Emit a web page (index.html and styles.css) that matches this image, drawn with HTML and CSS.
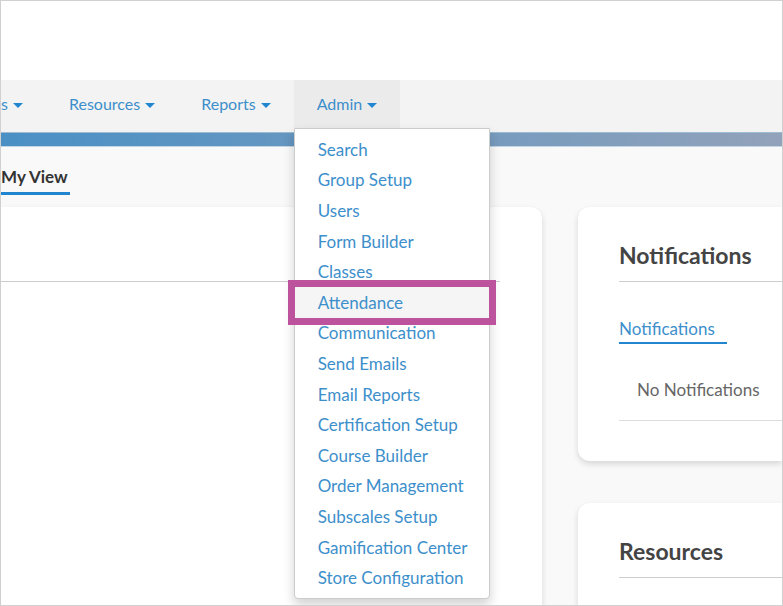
FILE: index.html
```html
<!DOCTYPE html>
<html lang="en">

<head>
  <meta charset="utf-8">
  <meta name="viewport" content="width=device-width, initial-scale=1.0">
  <title>My View</title>
  <link rel="stylesheet" href="styles.css">
</head>

<body>
  <header class="top"></header>

  <nav class="navbar">
    <ul class="nav">
      <li><a href="#">s <span class="caret"></span></a></li>
      <li><a href="#">Resources <span class="caret"></span></a></li>
      <li><a href="#">Reports <span class="caret"></span></a></li>
      <li class="open">
        <a href="#">Admin <span class="caret"></span></a>
        <ul class="dropdown">
          <li><a href="#">Search</a></li>
          <li><a href="#">Group Setup</a></li>
          <li><a href="#">Users</a></li>
          <li><a href="#">Form Builder</a></li>
          <li><a href="#">Classes</a></li>
          <li class="selected"><a href="#">Attendance</a></li>
          <li><a href="#">Communication</a></li>
          <li><a href="#">Send Emails</a></li>
          <li><a href="#">Email Reports</a></li>
          <li><a href="#">Certification Setup</a></li>
          <li><a href="#">Course Builder</a></li>
          <li><a href="#">Order Management</a></li>
          <li><a href="#">Subscales Setup</a></li>
          <li><a href="#">Gamification Center</a></li>
          <li><a href="#">Store Configuration</a></li>
        </ul>
      </li>
    </ul>
  </nav>
  <div class="stripe"></div>

  <main>
    <div class="tabs">
      <a class="tab" href="#">My View</a>
    </div>

    <div class="columns">
      <section class="panel main-panel">
        <hr>
      </section>

      <div class="side">
        <section class="panel card">
          <h2>Notifications</h2>
          <a class="card-tab" href="#">Notifications</a>
          <p class="empty">No Notifications</p>
        </section>
        <section class="panel card">
          <h2>Resources</h2>
        </section>
      </div>
    </div>
  </main>
</body>

</html>
```

FILE: styles.css
```css
* {
  box-sizing: border-box;
}

body {
  margin: 0;
  height: 100vh;
  display: flex;
  flex-direction: column;
  overflow: hidden;
  border: 1px solid #d0d0d0;
  background-color: #f9f9f9;
  color: #444;
  font-family: Lato, "Open Sans", sans-serif;
  font-size: 17px;
}

a {
  color: #3d8fcb;
  text-decoration: none;
}

ul {
  list-style: none;
  margin: 0;
  padding: 0;
}

.top {
  flex: none;
  height: 79px;
  background-color: white;
}

/* navigation */
.navbar {
  flex: none;
  background-color: #f3f3f3;
}

.nav {
  display: flex;
}

.nav > li {
  position: relative;
}

.nav > li > a {
  display: flex;
  align-items: center;
  gap: 5px;
  height: 52px;
  padding: 0 23px 6px;
  font-size: 16px;
}

.nav > li:first-child > a {
  padding-left: 0;
}

.nav > .open {
  background-color: #ebebeb;
}

.caret {
  margin-top: 4px;
  border-top: 5px solid #2185d0;
  border-left: 5px solid transparent;
  border-right: 5px solid transparent;
}

.dropdown {
  position: absolute;
  top: 48px;
  left: 0;
  z-index: 10;
  display: flex;
  flex-direction: column;
  width: 196px;
  height: 471px;
  padding: 5px 0;
  background-color: white;
  border: 1px solid #ccc;
  border-radius: 0 0 4px 4px;
  box-shadow: 0 6px 12px rgba(0, 0, 0, 0.18);
}

.dropdown li {
  flex: 1;
}

.dropdown a {
  display: flex;
  align-items: center;
  height: 100%;
  padding: 0 23px;
  white-space: nowrap;
}

.dropdown .selected {
  position: relative;
  background-color: #f5f5f5;
  outline: 7px solid #bd529d;
}

.stripe {
  flex: none;
  height: 15px;
  border-top: 1px solid #9dbcd4;
  border-bottom: 1px solid #c3d6e5;
  background: linear-gradient(to right, #4a90c5, #92a2ba);
}

/* page */
main {
  flex: 1;
  display: flex;
  flex-direction: column;
  min-height: 0;
}

.tabs {
  flex: none;
  display: flex;
  height: 60px;
  padding-top: 18px;
}

.tab {
  height: 30px;
  padding-right: 2px;
  border-bottom: 3px solid #2185d0;
  color: #333;
  font-size: 17px;
  font-weight: bold;
  line-height: 24px;
}

.columns {
  flex: 1;
  display: flex;
  gap: 36px;
  min-height: 0;
}

.panel {
  background-color: white;
  box-shadow: 0 3px 6px rgba(0, 0, 0, 0.14);
}

.main-panel {
  flex: 1;
  padding: 74px 42px 0 0;
  border-top-right-radius: 12px;
}

.main-panel hr {
  margin: 0;
  border: 0;
  border-top: 1px solid #ccc;
}

.side {
  flex: 0 0 204px;
  display: flex;
  flex-direction: column;
  gap: 42px;
}

.card {
  flex: none;
  padding: 32px 0 40px 41px;
  border-radius: 12px 0 0 12px;
}

.card h2 {
  margin: 0;
  padding-bottom: 10px;
  border-bottom: 1px solid #ccc;
  font-size: 23px;
  line-height: 32px;
}

.card-tab {
  display: inline-block;
  margin-top: 34px;
  padding-right: 12px;
  border-bottom: 2px solid #2185d0;
  line-height: 26px;
}

.empty {
  margin: 0;
  padding: 32px 18px 16px;
  border-bottom: 1px solid #ddd;
  color: #666;
  line-height: 28px;
}
```
